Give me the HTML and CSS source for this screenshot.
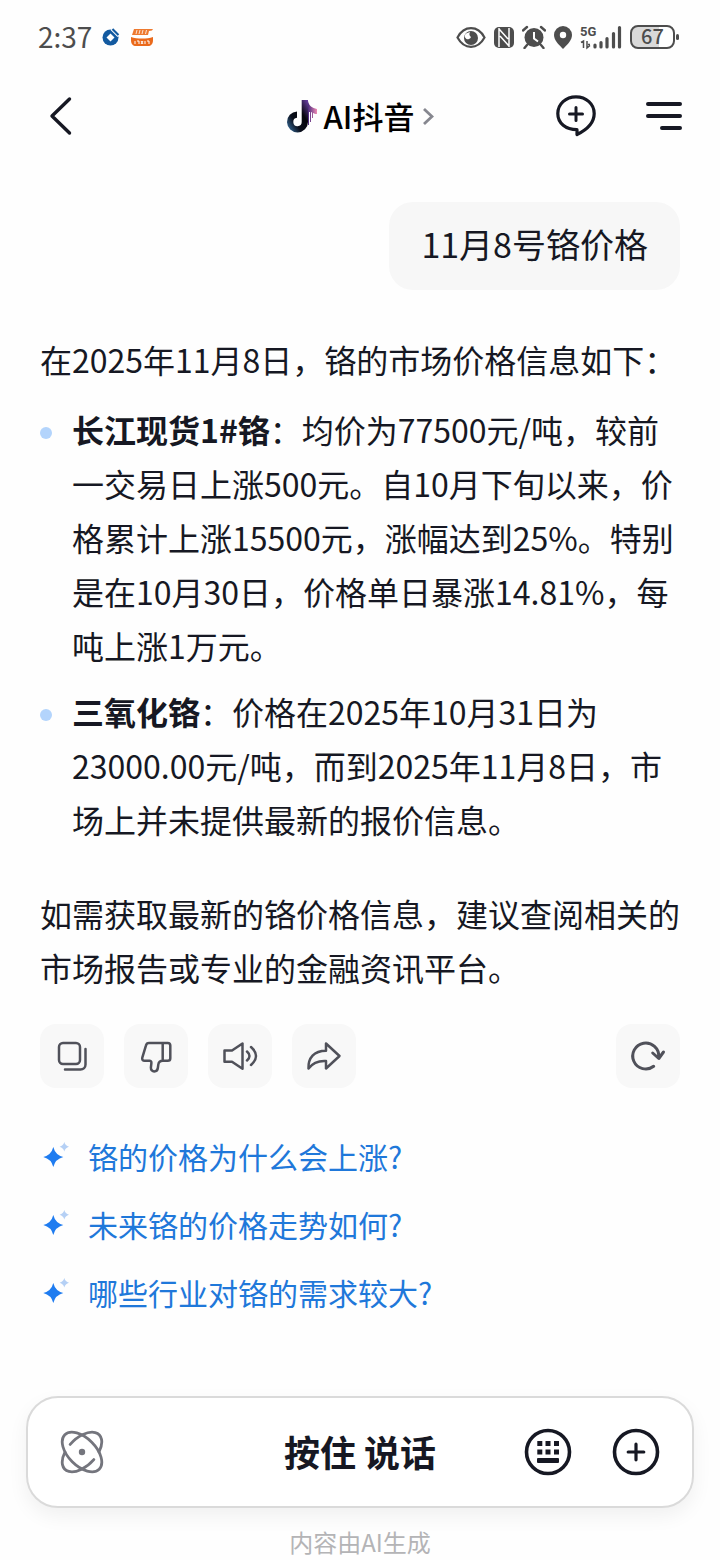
FILE: index.html
```html
<!DOCTYPE html>
<html lang="zh-CN">
<head>
  <meta charset="UTF-8" />
  <meta name="viewport" content="width=device-width, initial-scale=1.0"/>
  <title>AI抖音</title>
  <link rel="stylesheet" href="styles.css">
</head>
<body>

  <div class="status-bar">
    <span class="time">2:37</span>
    <svg class="bank" width="18" height="18" viewBox="0 0 18 18">
      <circle cx="8.500" cy="9.500" r="8" fill="#135aa0"/>
      <path d="M8.500 5.500l4 4-4 4-4-4z" fill="#fff"/>
      <path d="M9 1.500l7 7" stroke="#fff" stroke-width="1.200"/>
      <path d="M10.500 1l6 6" stroke="#135aa0" stroke-width="2"/>
    </svg>
    <svg class="bowl" width="24" height="20" viewBox="0 0 24 20">
      <path d="M4 2h19l-1 1.500-3 .5-1 4H2z" fill="#ee7a30"/>
      <path d="M7 3L6 7M10 3L9 7M13 3l-1 4M16.500 3l-1 4" stroke="#fff" stroke-width="0.800"/>
      <path d="M1 10c6 2 16 2 22 0v3c0 4-2 6-5 6H6c-3 0-5-2-5-6z" fill="#ea6a1c"/>
      <path d="M5 14v3M7 14h2v3M11 14l2 3M13 14l-2 3M15 14v3M17 14h2v3" fill="none" stroke="#fff" stroke-width="1"/>
    </svg>

    <div class="status-icons">
      <svg width="30" height="24" viewBox="0 0 30 24">
        <path d="M1.500 12.500C5 6 9.500 3.200 15 3.200S25 6 28.500 12.500C25 19 20.500 21.800 15 21.800S5 19 1.500 12.500z" fill="none" stroke="#4d4d4d" stroke-width="2.200"/>
        <circle cx="15" cy="13" r="7" fill="#4d4d4d"/>
        <path d="M10 8.500a3.200 3.200 0 1 0 5 3.500A4 4 0 0 1 14 7z" fill="#fff"/>
      </svg>
      <svg width="20" height="24" viewBox="0 0 20 24">
        <rect y="2" width="20" height="21" rx="5" fill="#4d4d4d"/>
        <path d="M5 3v19M15 3v19M5.500 4.500L14 14M6 11l8.500 9.500" stroke="#fff" stroke-width="1.500"/>
      </svg>
      <svg width="24" height="24" viewBox="0 0 24 24">
        <circle cx="12" cy="12.500" r="9.500" fill="#4d4d4d"/>
        <path d="M1 5.500L5 2M19 2l4 3.500M5 20l-2.500 3M19 20l2.500 3" stroke="#4d4d4d" stroke-width="2.400" stroke-linecap="round"/>
        <path d="M12 7v6.500l4 3" fill="none" stroke="#fff" stroke-width="2"/>
      </svg>
      <svg width="18" height="24" viewBox="0 0 18 24">
        <path d="M9 1a9 9 0 0 1 9 9c0 5-4.500 9.500-9 14-4.500-4.500-9-9-9-14a9 9 0 0 1 9-9z" fill="#4d4d4d"/>
        <circle cx="9" cy="10" r="3.200" fill="#fff"/>
      </svg>
      <svg width="42" height="32" viewBox="0 -4 42 32">
        <text class="network" x="0" y="11">5G</text>
        <path d="M1 17.500L3.500 16v7M7 16v7l3-2.500M8 19.500h2" fill="none" stroke="#4d4d4d" stroke-width="1.500"/>
        <path d="M15 20v2M21 17.500V22M27 13.500V22M33.500 8.500V22M39.500 2.500V22" stroke="#4d4d4d" stroke-width="3.200" stroke-linecap="round"/>
      </svg>
      <div class="battery">67</div>
    </div>
  </div>

  <header class="header">
    <button class="icon-btn back" aria-label="返回">
      <svg width="44" height="44" viewBox="0 0 44 44">
        <path d="M31.500 5L14 22l17.500 17" fill="none" stroke="#161823" stroke-width="3.400" stroke-linecap="round" stroke-linejoin="round"/>
      </svg>
    </button>

    <a class="title" href="#">
      <svg width="32" height="36" viewBox="0 0 32 36">
        <defs>
          <linearGradient id="note" x1="0" y1="1" x2="1" y2="0">
            <stop offset="0" stop-color="#3f7fb5"/>
            <stop offset="0.350" stop-color="#0b0f1c"/>
            <stop offset="0.650" stop-color="#05050a"/>
            <stop offset="1" stop-color="#6b3fa8"/>
          </linearGradient>
          <linearGradient id="flag" x1="0" y1="0" x2="1" y2="0">
            <stop offset="0" stop-color="#4a2a7e"/>
            <stop offset="1" stop-color="#f08bb5"/>
          </linearGradient>
        </defs>
        <path d="M22 3c1 5 4 7 9 8v5c-2 0-3-.500-4-1v5h-1v-5.500l-1-.5v10h-1V14h-1v13h-1z" fill="url(#flag)"/>
        <path d="M11 13.500v6.300a4.200 4.200 0 1 0 4.700 4.200V2h6.300v22a10.500 10.500 0 1 1-11-10.500z" fill="url(#note)"/>
      </svg>
      <span>AI抖音</span>
      <svg class="arrow" width="12" height="20" viewBox="0 0 12 20">
        <path d="M2 3l8 7.500L2 18" fill="none" stroke="#86878f" stroke-width="2.800"/>
      </svg>
    </a>

    <div class="header-right">
      <button class="icon-btn" aria-label="新对话">
        <svg width="40" height="42" viewBox="0 0 40 42">
          <path d="M20 1.800c10.200 0 18.200 7.200 18.200 16.700 0 9.200-7.500 16.300-17.200 21v-4.800C9.800 34.700 1.800 28.300 1.800 18.500 1.800 9 9.800 1.800 20 1.800z" fill="none" stroke="#161823" stroke-width="3.200" stroke-linejoin="round"/>
          <path d="M20 12.500v13M13.500 19h13" stroke="#161823" stroke-width="3" stroke-linecap="round"/>
        </svg>
      </button>
      <button class="icon-btn" aria-label="菜单">
        <svg width="36" height="28" viewBox="0 0 36 28">
          <path d="M2 2h32M2 14h32M16 26h18" stroke="#161823" stroke-width="4" stroke-linecap="round"/>
        </svg>
      </button>
    </div>
  </header>

  <main class="chat">
    <div class="question">11月8号铬价格</div>

    <div class="answer">
      <p>在2025年11月8日，铬的市场价格信息如下：</p>
      <ul>
        <li><p><strong>长江现货1#铬</strong>：均价为77500元/吨，较前一交易日上涨500元。自10月下旬以来，价格累计上涨15500元，涨幅达到25%。特别是在10月30日，价格单日暴涨14.81%，每吨上涨1万元。</p></li>
        <li><p><strong>三氧化铬</strong>：价格在2025年10月31日为23000.00元/吨，而到2025年11月8日，市场上并未提供最新的报价信息。</p></li>
      </ul>
      <p>如需获取最新的铬价格信息，建议查阅相关的市场报告或专业的金融资讯平台。</p>
    </div>

    <div class="actions">
      <button aria-label="复制">
        <svg viewBox="0 0 64 64">
          <rect x="19" y="19" width="21" height="21" rx="4"/>
          <path d="M45.500 25v15.500a5 5 0 0 1-5 5H25"/>
        </svg>
      </button>
      <button aria-label="不喜欢">
        <svg viewBox="0 0 64 64">
          <path d="M38.700 19H25c-1.600 0-2.600.8-3 2.400l-3.700 12.200c-.5 1.900.5 3.200 2.400 3.200h4.800c1.300 0 2 .7 1.900 2l-.5 4.700c-.2 5.200 6.600 5.200 7 .2l.4-3c.3-2.300 1.500-3.900 4.400-3.900V19h5a2.600 2.600 0 0 1 2.600 2.600v12.600a2.600 2.600 0 0 1-2.600 2.600h-5"/>
        </svg>
      </button>
      <button aria-label="朗读">
        <svg viewBox="0 0 64 64">
          <path d="M16.500 26.500H24l10.500-7v25.300L24 37.700h-7.500z"/>
          <path d="M39 27.500q5 4.500 0 9M43 23q10 9 0 18"/>
        </svg>
      </button>
      <button aria-label="分享">
        <svg viewBox="0 0 64 64">
          <path d="M34 19.500L47.500 32 34 44.500V37c-8-.5-13 1.500-17.500 7.500C16 34 22 26.700 34 26.700z"/>
        </svg>
      </button>
      <button class="refresh" aria-label="重新生成">
        <svg viewBox="0 0 64 64">
          <path d="M37.700 42.300A13 13 0 1 1 42.700 33M36.700 29l6.100 5.500 4.700-6.500"/>
        </svg>
      </button>
    </div>

    <nav class="suggestions">
      <a href="#">
        <svg width="32" height="30" viewBox="0 0 32 30">
          <path d="M13.300 6q2 8 10 10-8 2-10 10-2-8-10-10 8-2 10-10z" fill="#1f7cf0"/>
          <path d="M24.300 1q1 3.700 4.700 4.700-3.700 1-4.700 4.700-1-3.700-4.700-4.700 3.700-1 4.700-4.700z" fill="#b5d0f5"/>
        </svg>
        铬的价格为什么会上涨?
      </a>
      <a href="#">
        <svg width="32" height="30" viewBox="0 0 32 30">
          <path d="M13.300 6q2 8 10 10-8 2-10 10-2-8-10-10 8-2 10-10z" fill="#1f7cf0"/>
          <path d="M24.300 1q1 3.700 4.700 4.700-3.700 1-4.700 4.700-1-3.700-4.700-4.700 3.700-1 4.700-4.700z" fill="#b5d0f5"/>
        </svg>
        未来铬的价格走势如何?
      </a>
      <a href="#">
        <svg width="32" height="30" viewBox="0 0 32 30">
          <path d="M13.300 6q2 8 10 10-8 2-10 10-2-8-10-10 8-2 10-10z" fill="#1f7cf0"/>
          <path d="M24.300 1q1 3.700 4.700 4.700-3.700 1-4.700 4.700-1-3.700-4.700-4.700 3.700-1 4.700-4.700z" fill="#b5d0f5"/>
        </svg>
        哪些行业对铬的需求较大?
      </a>
    </nav>
  </main>

  <footer class="footer">
    <div class="composer">
      <button class="icon-btn" aria-label="深度思考">
        <svg width="44" height="44" viewBox="-22 -22 44 44">
          <g fill="none" stroke="#74757d" stroke-width="2.800" stroke-linecap="round">
            <ellipse rx="24.300" ry="13.800" transform="rotate(45)"/>
            <path d="M3 13.700A24.300 13.800 0 0 1-12.150-11.950M-3-13.700A24.300 13.800 0 0 1 12.150 11.950" transform="rotate(-45)"/>
          </g>
          <circle r="3.200" fill="#74757d"/>
        </svg>
      </button>
      <button class="talk">按住 说话</button>
      <div class="composer-right">
        <button class="icon-btn" aria-label="键盘">
          <svg width="48" height="48" viewBox="-24 -24 48 48">
            <circle r="21.500" fill="none" stroke="#161823" stroke-width="3.600"/>
            <path d="M-8.200-11v5M0-11v5M8.500-11v5M-8.200-2.500v5M0-2.500v5M8.500-2.500v5" stroke="#161823" stroke-width="5"/>
            <rect x="-11" y="6" width="22" height="5" rx="1" fill="#161823"/>
          </svg>
        </button>
        <button class="icon-btn" aria-label="更多">
          <svg width="48" height="48" viewBox="-24 -24 48 48">
            <circle r="21.500" fill="none" stroke="#161823" stroke-width="3.600"/>
            <path d="M0-7.800V7.800M-7.800 0H7.800" stroke="#161823" stroke-width="3.200" stroke-linecap="round"/>
          </svg>
        </button>
      </div>
    </div>
    <p class="notice">内容由AI生成</p>
  </footer>

</body>
</html>
```
FILE: styles.css
```css
* {
  box-sizing: border-box;
}

body {
  margin: 0;
  min-height: 100vh;
  display: flex;
  flex-direction: column;
  background-color: #fefefe;
  color: #161823;
  font-family: "Noto Sans CJK SC", sans-serif;
}

p, ul {
  margin: 0;
  padding: 0;
}

button {
  font-family: inherit;
  color: inherit;
  background: none;
  border: none;
  padding: 0;
  cursor: pointer;
}

a {
  text-decoration: none;
}

svg {
  display: block;
  flex: none;
}

/* status bar */
.status-bar {
  display: flex;
  align-items: center;
  height: 74px;
  padding: 0 45px 0 38px;
  color: #4d4d4d;
}

.time {
  padding-bottom: 2px;
  font-size: 28px;
  line-height: 40px;
}

.bank {
  margin: 0 10px;
}

.status-icons {
  display: flex;
  align-items: center;
  gap: 8px;
  margin-left: auto;
}

.network {
  font-family: Roboto, sans-serif;
  font-size: 13px;
  font-weight: 700;
  fill: #4d4d4d;
}

.battery {
  position: relative;
  width: 45px;
  height: 24px;
  border: 2px solid #4d4d4d;
  border-radius: 8px;
  background: linear-gradient(to right, #d9d9d9 67%, #fefefe 67%);
  font-size: 20px;
  font-weight: 500;
  line-height: 18px;
  text-align: center;
}

.battery::after {
  content: "";
  position: absolute;
  top: 7px;
  right: -6px;
  width: 3px;
  height: 6px;
  border-radius: 2px;
  background-color: #4d4d4d;
}

/* header */
.header {
  display: grid;
  grid-template-columns: 1fr auto 1fr;
  align-items: center;
  height: 84px;
  padding: 0 38px;
}

.icon-btn {
  display: block;
}

.back {
  justify-self: start;
}

.title {
  display: flex;
  align-items: center;
  gap: 8px;
  color: #000;
  font-size: 31px;
  font-weight: 500;
  line-height: 36px;
}

.title svg:first-child {
  margin-right: -2px;
}

.header-right {
  display: flex;
  align-items: center;
  gap: 50px;
  justify-self: end;
}

/* conversation */
.chat {
  padding: 44px 40px;
}

.question {
  width: fit-content;
  margin: 0 0 42px auto;
  padding: 18px 32px 22px;
  border-radius: 24px;
  background-color: #f7f7f7;
  font-size: 34px;
  line-height: 48px;
}

.answer {
  font-size: 32px;
  line-height: 54px;
}

.answer ul {
  display: flex;
  flex-direction: column;
  gap: 12px;
  margin: 16px 0 40px;
  list-style: none;
}

.answer li {
  display: flex;
  gap: 20px;
}

.answer li::before {
  content: "";
  flex: none;
  width: 12px;
  height: 12px;
  margin-top: 25px;
  border-radius: 50%;
  background-color: #b3d4fc;
}

.actions {
  display: flex;
  gap: 20px;
  margin: 30px 0 46px;
}

.actions button {
  width: 64px;
  height: 64px;
  border-radius: 16px;
  background-color: #f8f8f8;
}

.actions svg {
  fill: none;
  stroke: #50515a;
  stroke-width: 2.5;
  stroke-linecap: round;
  stroke-linejoin: round;
}

.actions .refresh {
  margin-left: auto;
}

.refresh svg {
  stroke-width: 3;
}

.suggestions {
  display: flex;
  flex-direction: column;
  align-items: flex-start;
  gap: 24px;
}

.suggestions a {
  display: flex;
  align-items: center;
  gap: 16px;
  color: #1f78da;
  font-size: 30px;
  line-height: 44px;
}

/* bottom input */
.footer {
  margin-top: auto;
  padding: 0 26px;
}

.composer {
  display: grid;
  grid-template-columns: 1fr auto 1fr;
  align-items: center;
  height: 112px;
  padding: 0 32px;
  border: 2px solid #dadada;
  border-radius: 32px;
  background-color: #fff;
  box-shadow: 0 8px 20px rgba(0, 0, 0, 0.06);
}

.composer > .icon-btn {
  justify-self: start;
}

.talk {
  padding-bottom: 2px;
  font-size: 36px;
  font-weight: 700;
  line-height: 48px;
}

.composer-right {
  display: flex;
  gap: 40px;
  justify-self: end;
}

.notice {
  margin-top: 18px;
  padding-bottom: 2px;
  color: #b4b4b6;
  font-size: 24px;
  line-height: 32px;
  text-align: center;
}
```
